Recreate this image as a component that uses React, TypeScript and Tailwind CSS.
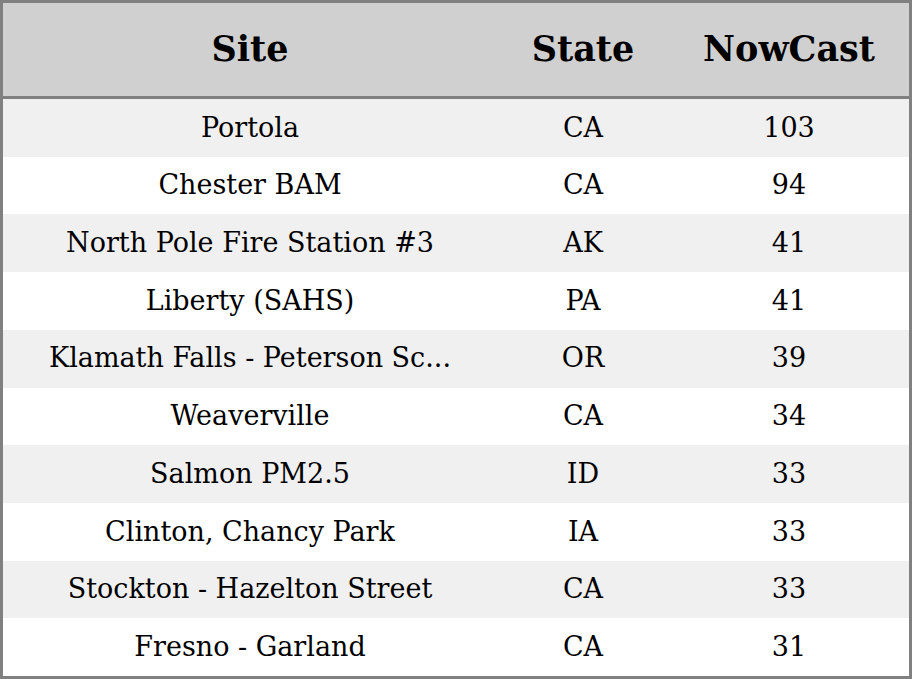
const rows: [string, string, number][] = [
  ['Portola', 'CA', 103],
  ['Chester BAM', 'CA', 94],
  ['North Pole Fire Station #3', 'AK', 41],
  ['Liberty (SAHS)', 'PA', 41],
  ['Klamath Falls - Peterson Sc...', 'OR', 39],
  ['Weaverville', 'CA', 34],
  ['Salmon PM2.5', 'ID', 33],
  ['Clinton, Chancy Park', 'IA', 33],
  ['Stockton - Hazelton Street', 'CA', 33],
  ['Fresno - Garland', 'CA', 31],
];

export default function App() {
  return (
    <div
      className="flex h-screen w-full flex-col border-[3px] border-[#808080] bg-white text-black"
      style={{ fontFamily: '"DejaVu Serif", serif' }}
    >
      {/* header */}
      <div className="flex h-[96px] shrink-0 items-center border-b-[3px] border-[#808080] bg-[#d0d0d0] text-[35px] font-bold">
        <div className="w-[494px] text-center">Site</div>
        <div className="w-[172px] text-center">State</div>
        <div className="flex-1 text-center">NowCast</div>
      </div>

      {rows.map(([site, state, val], i) => (
        <div
          key={site}
          className={`flex flex-1 items-center text-[27px] ${i % 2 === 0 ? 'bg-[#f0f0f0]' : 'bg-white'}`}
        >
          <div className="w-[494px] truncate px-[36px] text-center">{site}</div>
          <div className="w-[172px] text-center">{state}</div>
          <div className="flex-1 text-center">{val}</div>
        </div>
      ))}
    </div>
  );
}
